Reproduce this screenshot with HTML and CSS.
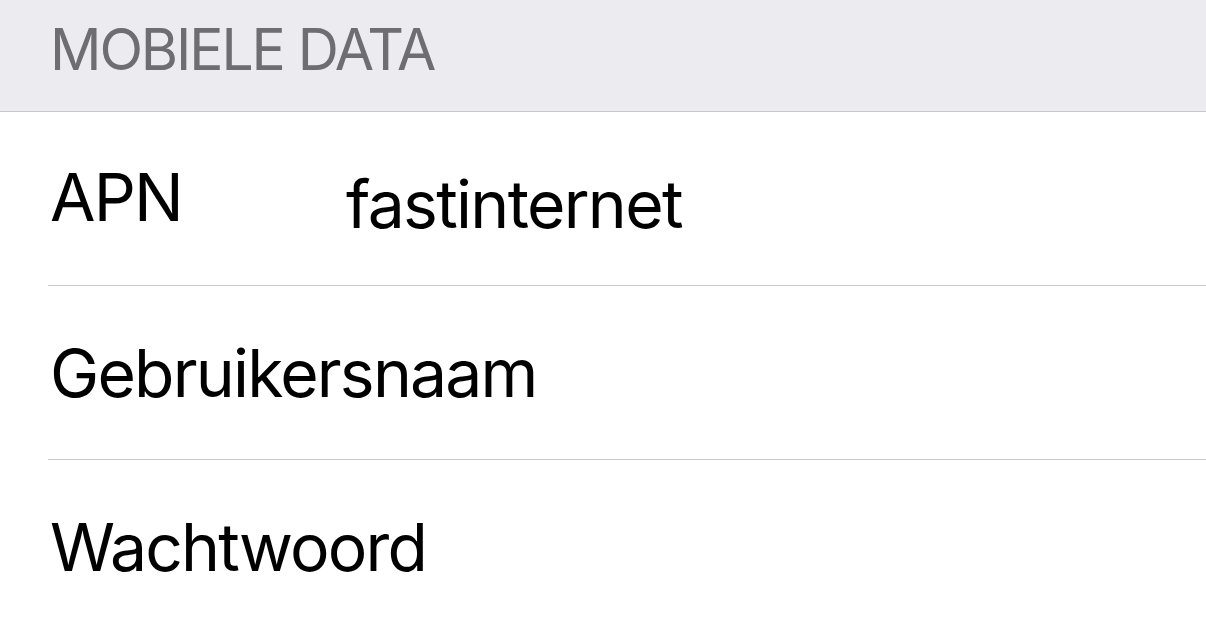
FILE: index.html
```html
<!DOCTYPE html>
<html lang="nl">
<head>
<meta charset="utf-8">
<title>Mobiele data</title>
<link rel="stylesheet" href="styles.css">
</head>
<body>
<div class="screen">
  <div class="section-header"><span class="section-title">MOBIELE DATA</span></div>
  <div class="list">
    <div class="row">
      <span class="label label-apn">APN</span>
      <span class="value">fastinternet</span>
    </div>
    <div class="row">
      <span class="label">Gebruikersnaam</span>
    </div>
    <div class="row row-last">
      <span class="label">Wachtwoord</span>
    </div>
  </div>
</div>
</body>
</html>
```

FILE: styles.css
```css
html, body {
  margin: 0;
  padding: 0;
  background: #ffffff;
}

.screen {
  width: 1206px;
  height: 629px;
  overflow: hidden;
  font-family: "Inter", "Roboto", "Liberation Sans", sans-serif;
}

.section-header {
  height: 112px;
  box-sizing: border-box;
  background: #ebebf0;
  border-bottom: 1px solid #c8c7cc;
  padding-left: 50px;
  display: flex;
  align-items: flex-start;
}

.section-title {
  font-size: 57px;
  line-height: 57px;
  margin-top: 21px;
  color: #6d6d72;
  letter-spacing: -2.1px;
}

.list {
  padding-left: 48px;
}

.row {
  height: 174px;
  box-sizing: border-box;
  border-bottom: 1px solid #c8c7cc;
  display: flex;
  align-items: flex-start;
  padding-left: 2px;
}

.row-last {
  border-bottom: none;
}

.label {
  font-size: 66px;
  line-height: 66px;
  margin-top: 54px;
  color: #000000;
  letter-spacing: -1.8px;
}

.label-apn {
  width: 296px;
  flex: none;
  margin-top: 52px;
}

.value {
  font-size: 66px;
  line-height: 66px;
  margin-top: 59px;
  color: #000000;
  letter-spacing: -1.7px;
}
```
